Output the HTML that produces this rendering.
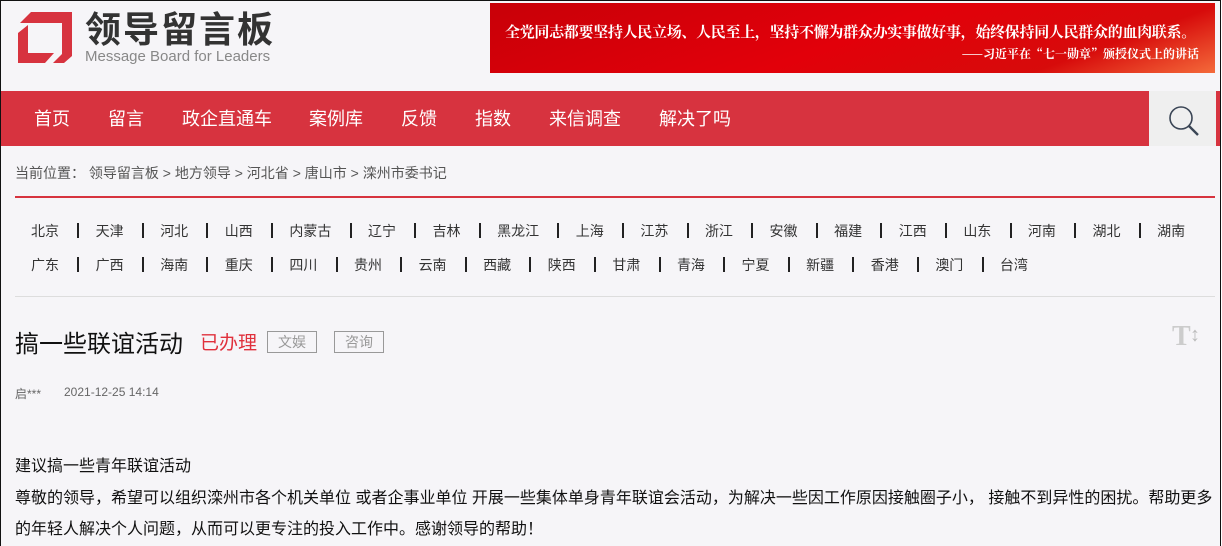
<!DOCTYPE html>
<html><head><meta charset="utf-8"><style>
*{margin:0;padding:0;box-sizing:border-box}
body{width:1222px;height:546px;overflow:hidden;background:#fff;font-family:"Liberation Sans","Noto Sans CJK SC",sans-serif}
.page{position:absolute;left:0;top:0;width:1221px;height:546px;border:1px solid #111;border-bottom:none;background:#f6f5f8;overflow:hidden}
.logo{position:absolute;left:16px;top:11px}
.banner{position:absolute;left:489px;top:2px;width:725px;height:70px;background:linear-gradient(160deg,#c80008 0%,#e2000a 50%,#d70b0b 80%,#f46a3a 100%);color:#fff;font-family:"Noto Serif CJK SC",serif;font-weight:bold}
.nav{position:absolute;left:0;top:90px;width:1219px;height:55px;background:#d7333f}
.nav a{position:absolute;top:16px;color:#fff;font-size:18px;line-height:24px;text-decoration:none}
.search{position:absolute;left:1148px;top:0;width:67px;height:55px;background:#efefef}
.crumb{position:absolute;left:14px;top:162px;font-size:14px;color:#555}
.redline{position:absolute;left:14px;top:195px;width:1200px;height:2px;background:#d7333f}
.prov{position:absolute;left:30px;font-size:14px;color:#333;white-space:nowrap}
.prov .s{display:inline-block;width:2px;height:15px;background:#222;margin:0 16.3px 0 18.3px;vertical-align:-2px}
.grayline{position:absolute;left:14px;top:295px;width:1200px;height:1px;background:#ddd}
.title{position:absolute;left:14px;top:323px;font-size:24px;color:#111}
.st{position:absolute;left:199px;top:327px;font-size:19px;color:#e0303c}
.tag{position:absolute;top:330px;height:22px;border:1px solid #999;color:#999;font-size:14px;line-height:20px;padding:0 10px}
.meta{position:absolute;top:384px;font-size:12px;color:#666}
.body{position:absolute;left:14px;top:450px;width:1202px;font-size:16px;line-height:31.5px;color:#111}
</style></head><body><div class="page">
<div class="logo">
<svg width="58" height="52" viewBox="0 0 58 52" style="position:absolute;left:0;top:0"><path d="M14 0H55V44L47 51H36L45 42V11H3Z" fill="#d7333f"/><path d="M1 21L11 13V41H37L28 51H1Z" fill="#d7333f"/></svg>
<div style="position:absolute;left:68px;top:0px;font-size:36px;line-height:36px;font-weight:bold;color:#333;letter-spacing:2px;white-space:nowrap">领导留言板</div>
<div style="position:absolute;left:68px;top:37px;font-size:15px;line-height:16px;color:#888;white-space:nowrap">Message Board for Leaders</div>
</div>
<div class="banner">
<div style="position:absolute;left:15px;top:18px;font-size:15px;white-space:nowrap;letter-spacing:-0.3px">全党同志都要坚持人民立场、人民至上，坚持不懈为群众办实事做好事，始终保持同人民群众的血肉联系。</div>
<div style="position:absolute;right:16px;top:42px;font-size:12px;white-space:nowrap">——习近平在“七一勋章”颁授仪式上的讲话</div>
</div>
<div class="nav">
<a style="left:33px">首页</a><a style="left:107px">留言</a><a style="left:181px">政企直通车</a><a style="left:308px">案例库</a><a style="left:400px">反馈</a><a style="left:474px">指数</a><a style="left:548px">来信调查</a><a style="left:658px">解决了吗</a>
<div class="search"><svg width="67" height="55"><circle cx="32" cy="27" r="11" fill="none" stroke="#3a4555" stroke-width="1.6"/><path d="M40 35L49 44" stroke="#3a4555" stroke-width="2.4"/></svg></div>
</div>
<div class="crumb">当前位置： 领导留言板 &gt; 地方领导 &gt; 河北省 &gt; 唐山市 &gt; 滦州市委书记</div>
<div class="redline"></div>
<div class="prov" style="top:220px">北京<i class="s"></i>天津<i class="s"></i>河北<i class="s"></i>山西<i class="s"></i>内蒙古<i class="s"></i>辽宁<i class="s"></i>吉林<i class="s"></i>黑龙江<i class="s"></i>上海<i class="s"></i>江苏<i class="s"></i>浙江<i class="s"></i>安徽<i class="s"></i>福建<i class="s"></i>江西<i class="s"></i>山东<i class="s"></i>河南<i class="s"></i>湖北<i class="s"></i>湖南</div>
<div class="prov" style="top:254px">广东<i class="s"></i>广西<i class="s"></i>海南<i class="s"></i>重庆<i class="s"></i>四川<i class="s"></i>贵州<i class="s"></i>云南<i class="s"></i>西藏<i class="s"></i>陕西<i class="s"></i>甘肃<i class="s"></i>青海<i class="s"></i>宁夏<i class="s"></i>新疆<i class="s"></i>香港<i class="s"></i>澳门<i class="s"></i>台湾</div>
<div class="grayline"></div>
<div class="title">搞一些联谊活动</div>
<div class="st">已办理</div>
<div class="tag" style="left:266px">文娱</div>
<div class="tag" style="left:333px">咨询</div>
<div style="position:absolute;left:1171px;top:320px;font-family:'Liberation Serif',serif;font-size:28px;font-weight:bold;color:#ccc">T</div>
<div style="position:absolute;left:1189px;top:323px;font-size:20px;color:#bbb">↕</div>
<div class="meta" style="left:14px">启***</div>
<div class="meta" style="left:63px">2021-12-25 14:14</div>
<div class="body">建议搞一些青年联谊活动<br>尊敬的领导，希望可以组织滦州市各个机关单位 或者企事业单位 开展一些集体单身青年联谊会活动，为解决一些因工作原因接触圈子小， 接触不到异性的困扰。帮助更多的年轻人解决个人问题，从而可以更专注的投入工作中。感谢领导的帮助！</div>
</div></body></html>
